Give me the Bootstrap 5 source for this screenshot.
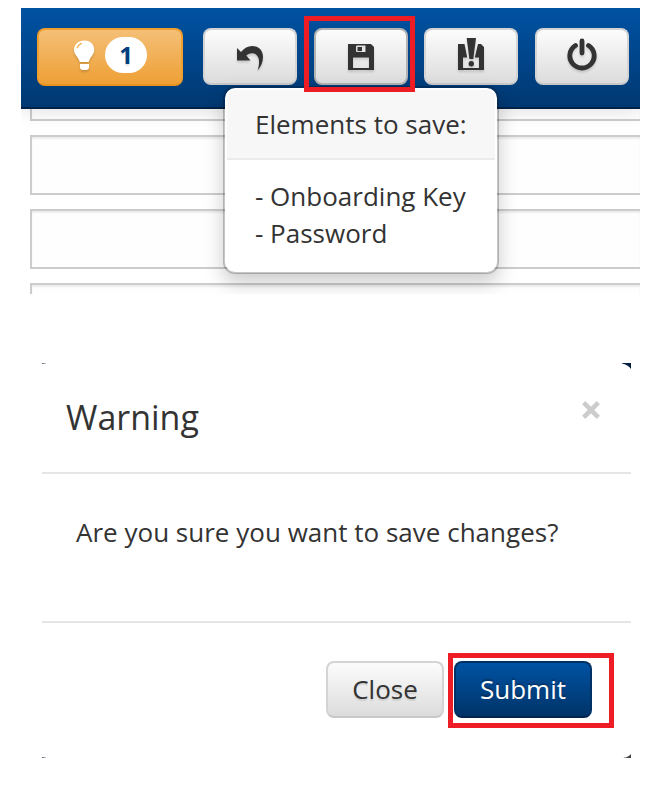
<!DOCTYPE html>
<html lang="en">
<head>
<meta charset="utf-8">
<meta name="viewport" content="width=device-width, initial-scale=1">
<title>Save changes</title>
<link href="https://cdn.jsdelivr.net/npm/bootstrap@5.3.0/dist/css/bootstrap.min.css" rel="stylesheet">
<style>
body{font-family:"Open Sans",sans-serif;font-size:26px;line-height:37px;color:#333;background:#fff;width:666px;height:785px;overflow:hidden}
.console{margin:8px 0 0 21px;width:619px;height:286px}
.topbar{height:101px;background:linear-gradient(#0052a3,#003871);border-bottom:2px solid #002248;padding:20px 11px 0 16px;box-shadow:0 2px 18px rgba(0,0,0,.12);z-index:2}
.tool{width:94px;height:57px;border:2px solid #d4d4d4;border-bottom-color:#c8c8c8;border-radius:8px;background:linear-gradient(#fcfcfc,#dcdcdc);padding:0;color:#333;font-size:26px;line-height:37px;text-shadow:0 2px 1px rgba(0,0,0,.1)}
.tool svg{display:block;filter:drop-shadow(0 2px 1px rgba(0,0,0,.15))}
.tool .raised{margin-bottom:3px}
.tool.alerts{width:146px;height:58px;margin-right:20px;border-color:#f09f2f;border-bottom-color:#e8941f;background:linear-gradient(#f4bf77,#eea035)}
.tool.pressed{border-color:#b3b3b3}
.tool-set{gap:16.6px}
.count{width:42px;height:36px;margin-bottom:4px;border-radius:18px;background:#fff;color:#003e7e;font-size:24px;font-weight:700;line-height:35px}
.highlight{border:5px solid #ee1c25;pointer-events:none}
.hl-save{left:283px;top:8px;width:111px;height:76px;z-index:5}
.field{height:60px;flex:none;margin-left:9px;border:2px solid #ccc;border-right:0;background:#fefefe;box-shadow:inset 0 2px 2px rgba(0,0,0,.07)}
.fields{gap:14px;margin-top:-48px}
.tip{left:202px;top:78px;width:276px;height:188px;padding:2px;border:2px solid rgba(0,0,0,.22);border-radius:12px;background:#fff;background-clip:padding-box;box-shadow:0 9px 19px rgba(0,0,0,.2);z-index:4}
.tip-head{height:70px;padding:16px 28px 0;background:#f7f7f7;border-bottom:2px solid #ebebeb;border-radius:9px 9px 0 0}
.tip-body{padding:18px 28px 0}
.dialog{margin:69px 0 0 42px;width:589px;height:395px}
.dialog-head{height:111px;border-bottom:2px solid #e5e5e5;padding:30px 30px 0 24px}
.dialog-title{font-size:34px;line-height:48px;color:#333}
.dismiss{width:20px;height:20px;margin-top:7px}
.dialog-body{height:149px;border-bottom:2px solid #e5e5e5;padding:40px 34px 0;letter-spacing:.01px}
.dialog-foot{padding:38px 39px 0;gap:10px}
.act{width:118px}
.act.go{width:138px;color:#fff;border-color:#003166;border-bottom-color:#00264d;background:linear-gradient(#0052a3,#003468);text-shadow:0 -2px 1px rgba(0,0,0,.25)}
.hl-submit{left:406px;top:290px;width:166px;height:75px}
.corner{width:9px;height:7px;right:0}
.speck{width:4px;height:1px;left:0;background:linear-gradient(90deg,#46586a,#d5d9dc)}
</style>
</head>
<body>
<section class="console position-relative overflow-hidden">
  <header class="topbar position-relative d-flex align-items-start">
    <button class="btn tool alerts d-flex align-items-center justify-content-center gap-2">
      <svg class="raised" width="24" height="34" viewBox="0 0 24 34"><path fill="#fff" d="M11.500 1.500C5.500 1.500 1 5.500 1 11c0 5 5.200 7.500 5.700 12h9.100c.5-4.500 5.400-7 5.400-12C21.200 5.500 17.500 1.500 11.500 1.500zM7 25h9v3.500c0 1.500-1.500 2.500-3 2.500h-3c-1.500 0-3-1-3-2.500z"/><path fill="none" stroke="#efaa49" stroke-width="1.300" d="M4 9Q5.500 5.500 8.700 4.200"/></svg>
      <span class="count text-center">1</span>
    </button>
    <div class="tool-set d-flex">
      <button class="btn tool d-flex align-items-center justify-content-center" aria-label="Undo">
        <svg width="28" height="28" viewBox="0 0 28 28"><path fill="#333" d="M1 5l4 4C8 5 12 3 16 3c7 0 11 4.500 11 11 0 5-2 10-5.500 13.500 1.500-4 2-9 1-12.500C21 10.500 15.500 8 10.300 12.500L14.500 17.500H1z"/></svg>
      </button>
      <button class="btn tool pressed d-flex align-items-center justify-content-center" aria-label="Save">
        <svg width="26" height="28" viewBox="0 0 26 28"><path fill="#333" fill-rule="evenodd" d="M0 1h23l3 3v23H0zM9 2.500q-1 0-1 1v4.500q0 1 1 1h8.500V2.500zM5.500 14.500q-.5 0-.5.700V25h16v-9.800q0-.7-.5-.7z"/><path fill="#333" d="M9.500 4H14v4H9.500z"/></svg>
      </button>
      <button class="btn tool d-flex align-items-center justify-content-center" aria-label="Force save">
        <svg class="raised" width="26" height="34" viewBox="0 0 26 34"><path fill="#333" d="M0 6h6.500l2.700 13.500H5V30h16V19.500h-4.200L20 6h3l3 3v23H0z"/><path fill="#333" d="M8.700 0H18l-2.700 21h-3.900z"/><circle cx="13.300" cy="25.700" r="2.700" fill="#333"/></svg>
      </button>
      <button class="btn tool d-flex align-items-center justify-content-center" aria-label="Log out">
        <svg class="raised" width="30" height="34" viewBox="0 0 30 34"><g fill="none" stroke="#333" stroke-width="4.800" stroke-linecap="round"><path d="M8.500 7.500A12.200 12.200 0 1 0 21.500 7.500M15 3v12"/></g></svg>
      </button>
    </div>
  </header>
  <div class="fields d-flex flex-column">
    <div class="field"></div><div class="field"></div><div class="field"></div><div class="field"></div>
  </div>
  <div class="tip position-absolute">
    <div class="tip-head text-nowrap">Elements to save:</div>
    <div class="tip-body text-nowrap">- Onboarding Key<br>- Password</div>
  </div>
  <div class="highlight hl-save position-absolute"></div>
</section>
<section class="dialog position-relative">
  <span class="speck position-absolute top-0"></span>
  <svg class="corner position-absolute top-0" viewBox="0 0 9 7"><path fill="#001f40" d="M0 0h9v6Q6 1.500 0 .5z"/></svg>
  <div class="dialog-head d-flex justify-content-between">
    <div class="dialog-title">Warning</div>
    <svg class="dismiss" viewBox="0 0 20 20" role="img" aria-label="Close"><path fill="none" stroke="#ccc" stroke-width="4.600" d="M2.700 2.700l14.600 14.600M17.300 2.700L2.700 17.300"/></svg>
  </div>
  <div class="dialog-body">Are you sure you want to save changes?</div>
  <div class="dialog-foot d-flex justify-content-end">
    <button class="btn tool act">Close</button>
    <button class="btn tool act go">Submit</button>
  </div>
  <div class="highlight hl-submit position-absolute"></div>
  <span class="speck position-absolute bottom-0"></span>
  <svg class="corner position-absolute bottom-0" viewBox="0 0 9 7"><path fill="#444" d="M9 3V7H1Q6 6.500 9 3z"/></svg>
</section>
<script src="https://cdn.jsdelivr.net/npm/bootstrap@5.3.0/dist/js/bootstrap.bundle.min.js"></script>
</body>
</html>
